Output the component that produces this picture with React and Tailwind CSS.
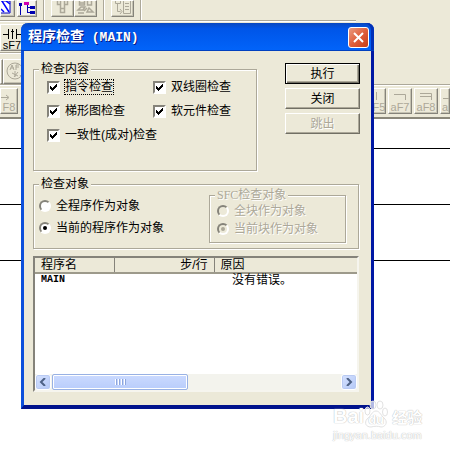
import { useState } from "react";
import clsx from "clsx";

const CheckItem = ({ label, focused }) => {
  const [checked, setChecked] = useState(true);

  return (
    <label className="flex h-5 items-center gap-1">
      <span className="grid">
        <input
          type="checkbox"
          checked={checked}
          onChange={() => setChecked(!checked)}
          className="peer size-[13px] appearance-none border-2 border-t-[#85837a] border-l-[#85837a] border-r-white border-b-white bg-white outline-none [grid-area:1/1]"
        />
        <svg
          viewBox="0 0 13 13"
          className="pointer-events-none invisible size-[13px] peer-checked:visible [grid-area:1/1]"
        >
          <path d="M3 5v3l2 2 5-5V2L5 7z" fill="#000" shapeRendering="crispEdges" />
        </svg>
      </span>
      <span
        className={clsx(
          "border border-dotted leading-[14px] whitespace-nowrap",
          focused ? "border-black" : "border-transparent"
        )}
      >
        {label}
      </span>
    </label>
  );
};

const RadioItem = ({ label, name, defaultChecked, disabled, className }) => (
  <label
    className={clsx(
      "flex items-center gap-[5px] whitespace-nowrap",
      disabled && "text-[#aca899] [text-shadow:1px_1px_0_#fff]",
      className
    )}
  >
    <span className="grid">
      <input
        type="radio"
        name={name}
        defaultChecked={defaultChecked}
        disabled={disabled}
        className="peer size-3 appearance-none rounded-full border-2 border-t-[#85837a] border-l-[#85837a] border-r-white border-b-white bg-white disabled:bg-[#ece9d8] [grid-area:1/1]"
      />
      <span className="pointer-events-none invisible m-auto size-1 rounded-full bg-black peer-checked:visible peer-disabled:bg-[#aca899] [grid-area:1/1]"></span>
    </span>
    {label}
  </label>
);

const GroupBox = ({ title, children, className, legendClass }) => (
  <fieldset
    className={clsx(
      "border border-[#aca899] shadow-[1px_1px_0_#fff,inset_1px_1px_0_#fff]",
      className
    )}
  >
    <legend className={clsx("bg-[#ece9d8] px-[2px]", legendClass)}>{title}</legend>
    {children}
  </fieldset>
);

const DialogButton = ({ children, primary, disabled }) => (
  <button
    type="button"
    disabled={disabled}
    className={clsx(
      "h-[21px] w-full border leading-[18px]",
      primary
        ? "border-black shadow-[inset_1px_1px_0_#fff,inset_-1px_-1px_0_#716f64,inset_-2px_-2px_0_#aca899]"
        : "border-t-white border-l-white border-r-[#716f64] border-b-[#716f64] shadow-[inset_-1px_-1px_0_#aca899]",
      disabled && "text-[#aca899] [text-shadow:1px_1px_0_#fff]"
    )}
  >
    {children}
  </button>
);

const ToolButton = ({ children, label, className }) => (
  <button
    type="button"
    aria-label={label}
    className={clsx(
      "flex shrink-0 flex-col items-center justify-end overflow-hidden border border-t-white border-l-white border-r-[#85837a] border-b-[#85837a] font-['Liberation_Sans',sans-serif] text-[11px] leading-[10px] shadow-[inset_-1px_-1px_0_#c5c2b2]",
      className
    )}
  >
    {children}
  </button>
);

const Divider = () => <div className="h-full w-[2px] border-r border-white bg-[#aca899]"></div>;

const Toolbars = () => (
  <div className="bg-[#ece9d8] text-[#aca899]">
    <div className="flex h-[21px] w-[356px] border-b border-b-[#aca899]">
      <ToolButton label="edit" className="h-[17px] w-[15px] bg-[#e3e1d6]">
        <svg viewBox="0 0 13 15" className="size-full" fill="none">
          <path d="M0 0h9v12H0" fill="#fff" stroke="#0000c0" />
          <path d="M1 0l7 11M0 8l3 3M5 0l4 3" stroke="#0000ff" strokeWidth="1.500" />
        </svg>
      </ToolButton>
      <ToolButton label="tree" className="ml-[2px] h-[17px] w-5 bg-[#f5f4ee]">
        <svg viewBox="0 0 18 15" className="size-full" shapeRendering="crispEdges">
          <path d="M1 2h3v3H1zM12 5h5v3h-5zM12 10h5v3h-5z" fill="#0000b0" />
          <path d="M6 1h5v3H6z" fill="#d000b0" />
          <path d="M2.500 5v9M9.500 4v7.500h3M9 6.500h3" stroke="#0000b0" fill="none" />
        </svg>
      </ToolButton>
      <div className="ml-[6px]">
        <Divider />
      </div>
      <ToolButton label="transfer" className="ml-[6px] h-[17px] w-[23px]">
        <svg viewBox="0 0 21 15" className="size-full" fill="none" stroke="#aca899">
          <path d="M5.500 0v3.500h3V0M12.500 0v3.500h3V0M8.500 4v3M12.500 4v3M8.500 7.500h4v4h-4z" strokeWidth="1.500" />
        </svg>
      </ToolButton>
      <ToolButton label="monitor" className="h-[17px] w-[23px]">
        <svg viewBox="0 0 21 15" className="size-full" fill="none" stroke="#aca899">
          <path d="M4.500 0v4h5V0M5 2h4M12.500 0v4h4V0M3 9l3-3h4l-2 3zM3 12h6M12 11l2-4 4 4zM9 10l3-3" strokeWidth="1.500" />
        </svg>
      </ToolButton>
      <div className="ml-[6px]">
        <Divider />
      </div>
      <ToolButton label="list" className="ml-[6px] h-[17px] w-[23px]">
        <svg viewBox="0 0 21 15" className="size-full" fill="none" stroke="#aca899">
          <path d="M3.500 0v2.500h5V0M5.500 3v7.500h3M8 8l2 2.500L8 13M11.500 0v12.500h7V0M13 2.500h4M13 5.500h4M13 8.500h4" />
        </svg>
      </ToolButton>
      <div className="ml-[6px]">
        <Divider />
      </div>
    </div>
    <div className="flex h-8 w-[356px] items-center border-t border-b border-t-white border-b-[#aca899]">
      <ToolButton className="h-[27px] w-[24px] text-black">
        <svg viewBox="0 0 20 12" className="h-3 w-5" fill="none" stroke="#000" shapeRendering="crispEdges">
          <path d="M1 6h5M6.500 1v10M14.500 1v10M15 6h5M10.500 11V1M9 3h3" />
        </svg>
        sF7
      </ToolButton>
    </div>
    <div className="flex h-[31px] w-[356px] items-center border-t border-white pt-1">
      <ToolButton className="h-[25px] w-[3px]" label="previous" />
      <ToolButton className="h-[25px] w-[26px]" label="find">
        <svg viewBox="0 0 24 23" className="size-full" fill="none" stroke="#aca899">
          <circle cx="11" cy="11" r="8" />
          <path d="M6 10l2-5 2 5M7 8h3M12 10V5h3M12 7h3M11 11v6M8 13l6 3M14 12l-4 5M16 15l4 5" />
        </svg>
      </ToolButton>
    </div>
    <div className="flex h-[35px] items-center justify-between border-t border-b-2 border-t-[#aca899] border-b-[#8a877a] shadow-[inset_0_1px_0_#fff]">
      <ToolButton className="h-[26px] w-[18px] pb-px">
        <svg viewBox="0 0 16 10" className="h-[10px] w-4" fill="none" stroke="#aca899">
          <path d="M0 5.500h7M5 3l3 2.500L5 8" />
        </svg>
        F8
      </ToolButton>
      <div className="flex w-[78px] gap-[2px]">
        <ToolButton className="h-[26px] w-[14px] pb-px">
          <svg viewBox="0 0 16 10" className="h-[10px] w-4" stroke="#aca899">
            <path d="M5.500 0v8" />
          </svg>
          F5
        </ToolButton>
        <ToolButton className="h-[26px] w-6 pb-px">
          <svg viewBox="0 0 16 10" className="h-[10px] w-4" fill="none" stroke="#aca899">
            <path d="M2 2.500h11.500V8" />
          </svg>
          aF7
        </ToolButton>
        <ToolButton className="h-[26px] w-6 pb-px">
          <svg viewBox="0 0 16 10" className="h-[10px] w-4" fill="none" stroke="#aca899">
            <path d="M2 1.500h11.500V8M2 4.500h11" />
          </svg>
          aF8
        </ToolButton>
        <ToolButton className="h-[26px] w-[10px] pb-px">
          <svg viewBox="0 0 8 10" className="h-[10px] w-2" stroke="#aca899">
            <path d="M2 6.500h6" />
          </svg>
          a
        </ToolButton>
      </div>
    </div>
  </div>
);

const ScrollButton = ({ label, d }) => (
  <button
    type="button"
    aria-label={label}
    className="grid size-4 place-items-center rounded-[3px] border border-white bg-linear-to-br from-[#d6e2ff] to-[#b4c8f6] shadow-[inset_0_0_0_1px_#b9caf3]"
  >
    <svg viewBox="0 0 8 8" className="size-2" fill="none" stroke="#4d6185" strokeWidth="2">
      <path d={d} />
    </svg>
  </button>
);

const ResultList = () => (
  <div className="mt-[7px] mr-px border-2 border-t-[#85837a] border-l-[#85837a] border-r-[#f6f5ee] border-b-[#f6f5ee] bg-white">
    <div className="h-[116px]">
      <table className="w-full table-fixed border-collapse">
        <colgroup>
          <col className="w-[79px]" />
          <col className="w-[100px]" />
          <col />
        </colgroup>
        <thead>
          <tr className="border-b-2 border-[#9d9a8b] bg-[#ece9d8] text-left leading-[14px]">
            <th className="border-r border-[#85837a] px-[6px] font-normal">程序名</th>
            <th className="border-r border-l border-r-[#85837a] border-l-white px-[6px] text-right font-normal">
              步/行
            </th>
            <th className="px-[6px] font-normal">原因</th>
          </tr>
        </thead>
        <tbody>
          <tr className="leading-3">
            <td className="px-[6px] font-['Liberation_Mono',monospace] text-[10px] font-bold">MAIN</td>
            <td></td>
            <td className="pl-[18px]">没有错误。</td>
          </tr>
        </tbody>
      </table>
    </div>
    <div className="flex h-4 bg-[#f3f3ed]">
      <ScrollButton label="scroll left" d="M6 0L2 4l4 4" />
      <div className="flex-1">
        <div className="ml-px flex h-4 w-[47%] items-center justify-center gap-px rounded-[2px] border border-[#98b1e4] bg-linear-to-b from-[#cbdaff] to-[#b9cdfb] shadow-[inset_0_0_0_1px_#fff]">
          {[0, 1, 2, 3].map((i) => (
            <span key={i} className="h-[6px] w-[2px] border-r border-l border-r-[#8ca5dc] border-l-white"></span>
          ))}
        </div>
      </div>
      <ScrollButton label="scroll right" d="M2 0l4 4-4 4" />
    </div>
  </div>
);

const CheckDialog = () => (
  <div
    role="dialog"
    aria-labelledby="dialog-title"
    className="absolute top-[23px] left-[21px] w-[353px] rounded-t-[7px] border-x-[3px] border-b-4 border-l-[#0c50dc] border-r-[#0018a4] border-b-[#00138c] bg-[#ece9d8]"
  >
    <div className="-mx-[3px] flex h-7 items-center justify-between rounded-t-[7px] bg-linear-to-b from-[#0848c0] via-[#0055e8] via-20% to-[#0264fa] pr-[5px] pl-[7px] shadow-[inset_0_-1px_0_#0040c0,inset_-3px_0_0_#0030b8]">
      <h1
        id="dialog-title"
        className="text-[14px] leading-5 font-bold text-white [text-shadow:1px_1px_0_#0a1883]"
      >
        程序检查
        <span className="font-['Liberation_Mono',monospace] text-[13px]"> (MAIN)</span>
      </h1>
      <button
        type="button"
        aria-label="关闭窗口"
        className="grid size-[21px] place-items-center rounded-[3px] border border-white bg-linear-to-br from-[#e89a80] via-[#e0603c] to-[#c83c10]"
      >
        <svg viewBox="0 0 11 11" className="size-[11px]" stroke="#fff" strokeWidth="2">
          <path d="M1 1l9 9M10 1l-9 9" />
        </svg>
      </button>
    </div>

    <div className="pt-[10px] pr-[11px] pb-[13px] pl-[9px]">
      <div className="flex justify-between">
        <GroupBox title="检查内容" className="w-[224px] pb-[25px] pl-[13px]" legendClass="-ml-[8px] leading-4">
          <div className="grid grid-cols-[106px_1fr] gap-y-1">
            <CheckItem label="指令检查" focused />
            <CheckItem label="双线圈检查" />
            <CheckItem label="梯形图检查" />
            <CheckItem label="软元件检查" />
            <CheckItem label="一致性(成对)检查" />
          </div>
        </GroupBox>
        <div className="flex w-[75px] flex-col gap-1 pt-[2px]">
          <DialogButton primary>执行</DialogButton>
          <DialogButton>关闭</DialogButton>
          <DialogButton disabled>跳出</DialogButton>
        </div>
      </div>

      <GroupBox title="检查对象" className="mt-[5px] mr-px pl-[5px]" legendClass="leading-4">
        <div className="flex items-start justify-between pr-3 pb-[5px]">
          <div className="pt-[3px]">
            <RadioItem name="target" label="全程序作为对象" className="h-[22px]" />
            <RadioItem name="target" label="当前的程序作为对象" className="h-[22px]" defaultChecked />
          </div>
          <GroupBox
            title="SFC检查对象"
            className="-mt-1 w-[137px] pb-1 pl-[7px]"
            legendClass="font-['Liberation_Serif','Noto_Sans_CJK_SC',serif] -ml-[2px] leading-[14px] text-[#aca899] [text-shadow:1px_1px_0_#fff]"
          >
            <RadioItem name="sfc" label="全块作为对象" className="h-[18px]" disabled />
            <RadioItem name="sfc" label="当前块作为对象" className="h-[18px]" defaultChecked disabled />
          </GroupBox>
        </div>
      </GroupBox>

      <ResultList />
    </div>
  </div>
);

const Watermark = () => (
  <div className="absolute top-[400px] left-[333px] font-['Liberation_Sans','Noto_Sans_CJK_SC',sans-serif] text-white [text-shadow:0_0_1px_#bbb,0_0_1px_#ccc]">
    <div className="flex items-end">
      <span className="text-[20px] leading-6 font-bold">Bai</span>
      <span className="relative flex h-7 w-6 items-end justify-center">
        <svg
          viewBox="0 0 24 28"
          className="absolute inset-0 size-full"
          fill="#fff"
          fillOpacity="0.7"
          stroke="#e2e2e2"
        >
          <ellipse cx="3.500" cy="11" rx="2.500" ry="4" />
          <ellipse cx="9" cy="5" rx="3" ry="4" />
          <ellipse cx="16" cy="5" rx="3" ry="4" />
          <ellipse cx="21" cy="12" rx="2.500" ry="4" />
          <path d="M12 11c4 0 5 5 9 8 3 4 0 8-4 8-3-1-6-1-10 0-5 0-7-4-4-8 4-3 5-8 9-8z" />
        </svg>
        <span className="relative text-[13px] leading-4 font-bold">du</span>
      </span>
      <span className="pl-1 text-[15px] leading-5 font-bold">经验</span>
    </div>
    <div className="text-[11px] leading-[14px]">jingyan.baidu.com</div>
  </div>
);

const App = () => {
  return (
    <div className="relative min-h-screen overflow-hidden bg-white font-['Liberation_Sans','Noto_Sans_CJK_SC',sans-serif] text-[12px] text-black">
      <Toolbars />
      <main className="pt-[29px]">
        <div className="h-14 border-t border-black"></div>
        <div className="h-14 border-t border-black"></div>
        <div className="h-14 border-t border-black"></div>
      </main>
      <CheckDialog />
      <Watermark />
    </div>
  );
};

export default App;
